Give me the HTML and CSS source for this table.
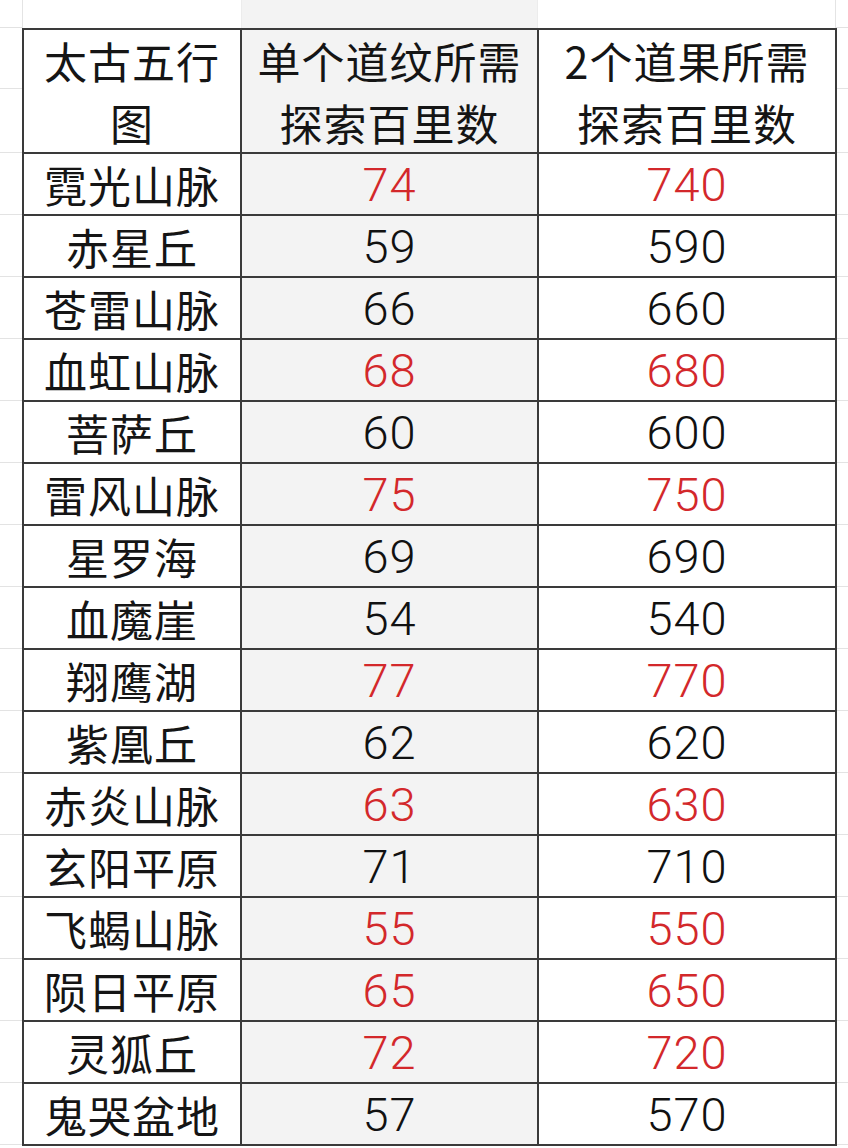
FILE: index.html
```html
<!DOCTYPE html>
<html lang="zh">
<head>
<meta charset="utf-8">
<title>太古五行图</title>
<link rel="stylesheet" href="styles.css">
</head>
<body>
<div class="sheet">
  <div class="toprow">
    <div class="tg tg-left"></div>
    <div class="tc"></div>
    <div class="tc tc-grey"></div>
    <div class="tc tc-last"></div>
    <div class="tg"></div>
  </div>
  <div class="main">
    <div class="gutter gutter-left"></div>
    <div class="table">
      <div class="cell head">太古五行<br>图</div>
      <div class="cell head grey">单个道纹所需<br>探索百里数</div>
      <div class="cell head">2个道果所需<br>探索百里数</div>

      <div class="cell name">霓光山脉</div><div class="cell num grey red">74</div><div class="cell num red">740</div>
      <div class="cell name">赤星丘</div><div class="cell num grey">59</div><div class="cell num">590</div>
      <div class="cell name">苍雷山脉</div><div class="cell num grey">66</div><div class="cell num">660</div>
      <div class="cell name">血虹山脉</div><div class="cell num grey red">68</div><div class="cell num red">680</div>
      <div class="cell name">菩萨丘</div><div class="cell num grey">60</div><div class="cell num">600</div>
      <div class="cell name">雷风山脉</div><div class="cell num grey red">75</div><div class="cell num red">750</div>
      <div class="cell name">星罗海</div><div class="cell num grey">69</div><div class="cell num">690</div>
      <div class="cell name">血魔崖</div><div class="cell num grey">54</div><div class="cell num">540</div>
      <div class="cell name">翔鹰湖</div><div class="cell num grey red">77</div><div class="cell num red">770</div>
      <div class="cell name">紫凰丘</div><div class="cell num grey">62</div><div class="cell num">620</div>
      <div class="cell name">赤炎山脉</div><div class="cell num grey red">63</div><div class="cell num red">630</div>
      <div class="cell name">玄阳平原</div><div class="cell num grey">71</div><div class="cell num">710</div>
      <div class="cell name">飞蝎山脉</div><div class="cell num grey red">55</div><div class="cell num red">550</div>
      <div class="cell name">陨日平原</div><div class="cell num grey red">65</div><div class="cell num red">650</div>
      <div class="cell name">灵狐丘</div><div class="cell num grey red">72</div><div class="cell num red">720</div>
      <div class="cell name">鬼哭盆地</div><div class="cell num grey">57</div><div class="cell num">570</div>
    </div>
    <div class="gutter gutter-right"></div>
  </div>
</div>
</body>
</html>
```

FILE: styles.css
```css
html, body {
  margin: 0;
  padding: 0;
  background: #ffffff;
}

body {
  width: 848px;
  height: 1148px;
  overflow: hidden;
  font-family: "Noto Sans CJK SC", "Noto Sans", sans-serif;
  color: #151515;
}

.sheet {
  display: flex;
  flex-direction: column;
  width: 848px;
}

/* faint spreadsheet row above the table */
.toprow {
  display: flex;
  height: 28px;
}

.tg {
  flex: 1;
  border-bottom: 1px solid #e2e2e2;
  box-sizing: border-box;
}

.tg-left {
  flex: 0 0 23px;
  border-right: 1px solid #e4e4e4;
}

.tc {
  flex: 0 0 218px;
}

.tc-grey {
  flex: 0 0 297px;
  background: #f3f3f3;
  border-left: 1px solid #ececec;
  border-right: 1px solid #ececec;
  box-sizing: border-box;
}

.tc-last {
  flex: 0 0 298px;
  border-right: 1px solid #e4e4e4;
  box-sizing: border-box;
}

.main {
  display: flex;
}

.gutter {
  background-image: repeating-linear-gradient(to bottom, transparent 0, transparent 61px, #e3e3e3 61px, #e3e3e3 62px);
  background-position: 0 63px;
}

.gutter-left {
  flex: 0 0 22px;
}

.gutter-right {
  flex: 1;
}

.table {
  display: grid;
  grid-template-columns: 216px 295px 296px;
  grid-template-rows: 122px repeat(16, 60px);
  gap: 2px;
  padding: 2px;
  background: #3a3a3a;
}

.cell {
  background: #ffffff;
  display: flex;
  align-items: center;
  justify-content: center;
  text-align: center;
  overflow: hidden;
}

.cell.grey {
  background: #f3f3f3;
}

.head {
  font-size: 43px;
  line-height: 62px;
  letter-spacing: 1px;
}

.name {
  font-size: 43px;
  letter-spacing: 1px;
}

.num {
  font-family: Roboto, "Noto Sans", sans-serif;
  font-weight: 300;
  font-size: 47px;
  color: #111111;
  letter-spacing: 1px;
}

.num.red {
  color: #d3282b;
}
```
